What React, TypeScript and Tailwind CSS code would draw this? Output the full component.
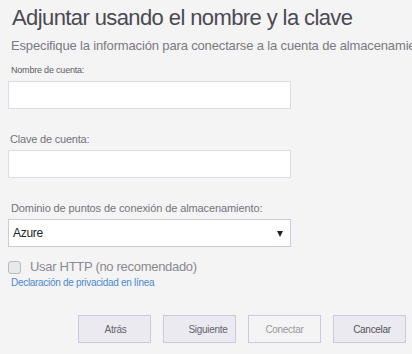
export default function App() {
  const font = { fontFamily: '"Liberation Sans", Arial, sans-serif' };
  return (
    <div className="w-[412px] h-[354px] overflow-hidden bg-[#f4f4f5] text-[#555] relative" style={font}>
      <div className="pt-[4px] pl-[12px] text-[22px] leading-[28px] tracking-[-0.6px] text-[#4b4a52] whitespace-nowrap">
        Adjuntar usando el nombre y la clave
      </div>
      <div className="mt-[6px] pl-[11px] text-[13px] leading-[16px] tracking-[-0.15px] text-[#7a7981] whitespace-nowrap overflow-hidden">
        Especifique la información para conectarse a la cuenta de almacenamiento
      </div>

      <div className="mt-[10px] pl-[11px] text-[9px] leading-[12px] tracking-[-0.2px] text-[#5e5d65]">Nombre de cuenta:</div>
      <div className="mt-[5px] ml-[8px] w-[283px] h-[28px] bg-white border border-[#dcdbe8]" />

      <div className="mt-[23px] pl-[10px] text-[11px] leading-[14px] tracking-[-0.2px] text-[#74737b]">Clave de cuenta:</div>
      <div className="mt-[4px] ml-[8px] w-[283px] h-[28px] bg-white border border-[#dcdbe8]" />

      <div className="mt-[23px] pl-[11px] text-[11px] leading-[14px] tracking-[-0.1px] text-[#74737b] whitespace-nowrap">
        Dominio de puntos de conexión de almacenamiento:
      </div>
      <div className="mt-[4px] ml-[8px] w-[283px] h-[28px] bg-white border border-[#cbc9dc] flex items-center justify-between pl-[4px] pr-[7px]">
        <span className="text-[12px] tracking-[-0.3px] text-[#222]">Azure</span>
        <svg width="6" height="6" viewBox="0 0 6 6" className="mt-[1px]">
          <path d="M0 0 H6 L3 6 Z" fill="#222" />
        </svg>
      </div>

      <div className="mt-[12px] ml-[8px] flex items-center gap-[9px]">
        <div className="w-[13px] h-[13px] rounded-[3px] border border-[#b8b8be] bg-[#e9e9ec]" />
        <span className="text-[13px] leading-[16px] tracking-[-0.3px] text-[#8a8990]">Usar HTTP (no recomendado)</span>
      </div>
      <div className="mt-[2px] pl-[11px] text-[10px] leading-[12px] tracking-[-0.3px] text-[#4a8ad0]">
        Declaración de privacidad en línea
      </div>

      <div className="absolute left-[78px] top-[315px] flex gap-[12px]">
        <button className="w-[73px] h-[28px] bg-[#ebeaf0] border border-[#cbc9dc] text-[10px] tracking-[-0.3px] text-[#66656d] pl-[2px]">Atrás</button>
        <button className="w-[73px] h-[28px] bg-[#ebeaf0] border border-[#cbc9dc] text-[10px] tracking-[-0.3px] text-[#66656d] pl-[17px]">Siguiente</button>
        <button className="w-[73px] h-[28px] bg-[#f4f4f5] border border-[#cbc9dc] text-[10px] tracking-[-0.3px] text-[#9a99a0]">Conectar</button>
        <button className="w-[73px] h-[28px] bg-[#ebeaf0] border border-[#cbc9dc] text-[10px] tracking-[-0.3px] text-[#55545c] pl-[5px]">Cancelar</button>
      </div>
    </div>
  );
}
